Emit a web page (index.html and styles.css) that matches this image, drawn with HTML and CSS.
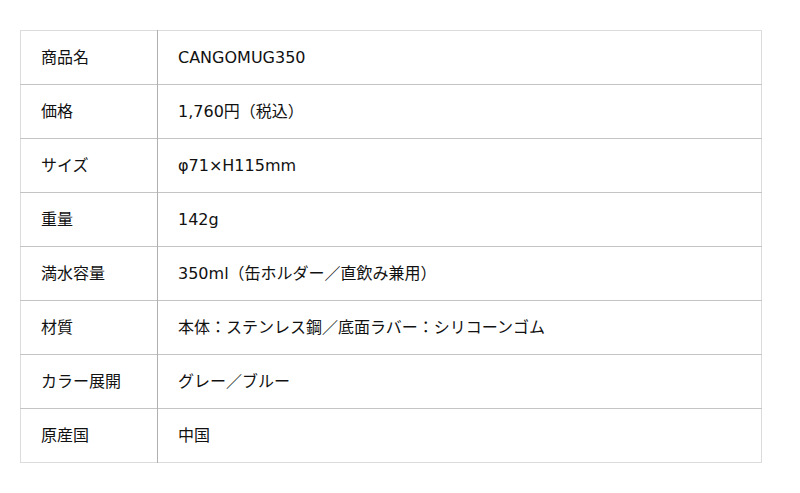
FILE: index.html
```html
<!DOCTYPE html>
<html lang="ja">
<head>
<meta charset="utf-8">
<link rel="stylesheet" href="styles.css">
</head>
<body>
<div class="wrap">
<table class="spec">
<tr><th>商品名</th><td>CANGOMUG350</td></tr>
<tr><th>価格</th><td>1,760円（税込）</td></tr>
<tr><th>サイズ</th><td>φ71×H115mm</td></tr>
<tr><th>重量</th><td>142g</td></tr>
<tr><th>満水容量</th><td>350ml（缶ホルダー／直飲み兼用）</td></tr>
<tr><th>材質</th><td>本体：ステンレス鋼／底面ラバー：シリコーンゴム</td></tr>
<tr><th>カラー展開</th><td>グレー／ブルー</td></tr>
<tr><th>原産国</th><td>中国</td></tr>
</table>
</div>
</body>
</html>
```
FILE: styles.css
```css
html, body {
  margin: 0;
  background: #fff;
}
.wrap {
  padding: 30px 0 0 20px;
}
.spec {
  width: 742px;
  border-collapse: collapse;
  border: 1px solid #dcdcdc;
  font-family: "DejaVu Sans", "Noto Sans CJK JP", sans-serif;
  font-size: 16px;
  line-height: 20px;
  color: #111;
}
.spec th, .spec td {
  height: 54px;
  padding: 0 0 0 20px;
  text-align: left;
  font-weight: normal;
  vertical-align: middle;
  box-sizing: border-box;
}
.spec th {
  width: 137px;
  border-right: 1px solid #b0b0b0;
}
.spec tr + tr th, .spec tr + tr td {
  border-top: 1px solid #c4c4c4;
}
```
